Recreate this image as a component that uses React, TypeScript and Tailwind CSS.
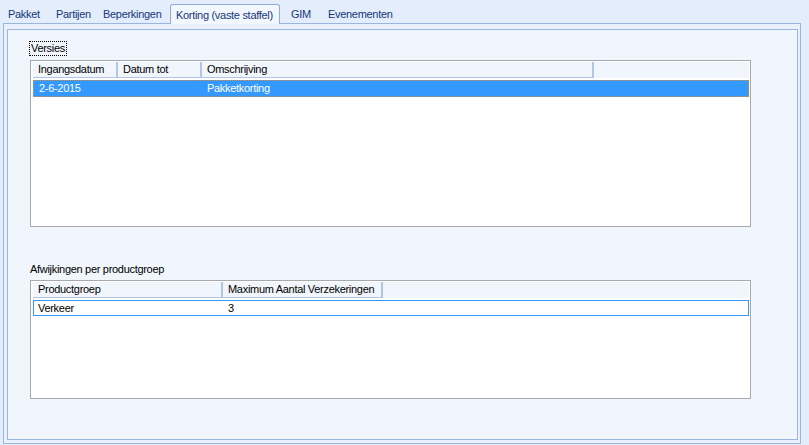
import React from 'react'

const tabs = [
  { label: 'Pakket', cls: 'w-[48px]' },
  { label: 'Partijen', cls: 'w-[47px]' },
  { label: 'Beperkingen', cls: 'w-[67px]' },
]

function HeaderCell({ label, width }: { label: string; width: string }) {
  return (
    <div
      className={`${width} h-[16px] flex items-center pl-[5px] border-r-2 border-b border-[#b2c6e3] shrink-0 whitespace-nowrap`}
    >
      {label}
    </div>
  )
}

export default function App() {
  return (
    <div
      className="w-[809px] h-[445px] bg-[#e3edfc] text-[11px] tracking-[-0.3px] text-black overflow-hidden"
      style={{ fontFamily: '"Liberation Sans", Arial, sans-serif' }}
    >
      {/* tab strip */}
      <div className="h-[24px] flex items-end pl-[8px] text-[#15387a]">
        {tabs.map(t => (
          <div key={t.label} className={`${t.cls} h-[20px] flex items-center pt-[1px] whitespace-nowrap`}>
            {t.label}
          </div>
        ))}
        <div className="relative z-10 w-[110px] h-[20px] flex items-center pl-[5px] pt-[1px] bg-[#f2f7fe] border border-b-0 border-[#8fadd8] rounded-t-[3px] whitespace-nowrap">
          Korting (vaste staffel)
        </div>
        <div className="w-[48px] h-[20px] flex items-center pl-[11px] pt-[1px]">GIM</div>
        <div className="h-[20px] flex items-center pt-[1px]">Evenementen</div>
      </div>

      {/* frame */}
      <div className="-mt-px ml-[3px] w-[798px] h-[421px] border border-[#9ab5de] bg-[#eaf1fc] pl-[3px] pt-[5px]">
        <div className="w-[791px] h-[411px] border border-[#9ab5de] bg-[#f1f6fd]">
          {/* Versies */}
          <div className="ml-[21px] mt-[11px] w-[38px] h-[15px] border border-dotted border-black flex items-center pl-[1px] leading-[13px]">
            Versies
          </div>
          <div className="ml-[22px] mt-[4px] w-[721px] h-[167px] border border-[#a6a9ad] bg-white pl-[2px] pt-px">
            <div className="flex bg-[#f1f6fd] w-[716px]">
              <HeaderCell label="Ingangsdatum" width="w-[85px]" />
              <HeaderCell label="Datum tot" width="w-[84px]" />
              <HeaderCell label="Omschrijving" width="w-[392px]" />
            </div>
            <div className="mt-[2px] w-[716px] h-[17px] flex items-center bg-[#3399ff] text-white border border-dotted border-[#d98a3a]">
              <div className="w-[168px] pl-[5px]">2-6-2015</div>
              <div className="pl-[5px]">Pakketkorting</div>
            </div>
          </div>

          {/* Afwijkingen */}
          <div className="ml-[22px] mt-[36px] leading-[13px]">Afwijkingen per productgroep</div>
          <div className="ml-[22px] mt-[4px] w-[721px] h-[119px] border border-[#a6a9ad] bg-white pl-[2px] pt-px">
            <div className="flex bg-[#f1f6fd] w-[716px]">
              <HeaderCell label="Productgroep" width="w-[190px]" />
              <HeaderCell label="Maximum Aantal Verzekeringen" width="w-[160px]" />
            </div>
            <div className="mt-[2px] w-[716px] h-[16px] flex items-center border border-[#3399ff]">
              <div className="w-[190px] pl-[4px]">Verkeer</div>
              <div className="pl-[4px]">3</div>
            </div>
          </div>
        </div>
      </div>
    </div>
  )
}
